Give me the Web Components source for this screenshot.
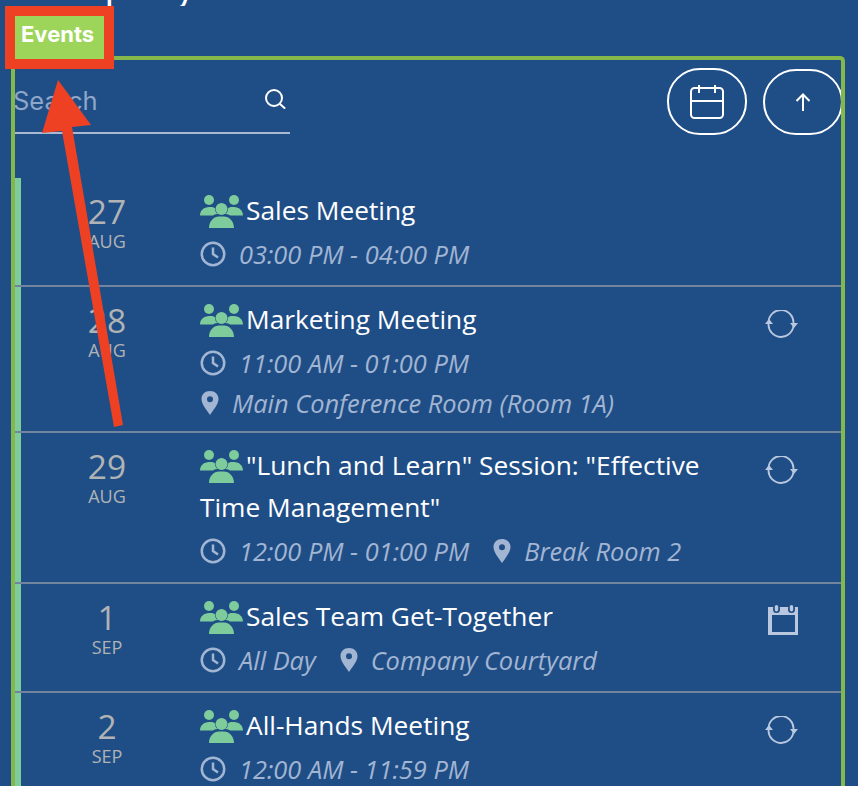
<!DOCTYPE html>
<html><head><meta charset="utf-8">
<style>
html,body{margin:0;height:786px;overflow:hidden;background:#1f4e87}
body{position:relative;font-family:"Open Sans","Noto Sans",sans-serif}
</style></head><body>
<template id="tpl-page">
<style>
:host{display:block;height:786px;overflow:hidden;position:relative}
.title{height:6px;overflow:hidden;color:#fff;font-size:40px;line-height:44px;font-family:"Open Sans",sans-serif;padding-left:18px}
.title span{display:block;margin-top:-38px;white-space:nowrap}
.tag{width:89px;height:43px;margin:10px 0 -3px 15px;background:#9dd55a;color:#fff;font:700 22px/37px Inter,sans-serif;box-sizing:border-box;padding-left:6px;position:relative;z-index:1}
.panel{margin-left:11px;width:834px;box-sizing:border-box;border:4px solid #84b84a;border-bottom:0;border-radius:5px 5px 0 0}
.toolbar{display:flex;align-items:flex-start;height:118px;box-sizing:border-box;padding-top:8px;overflow:hidden}
.spacer{flex:1}
.btns{display:flex;gap:16px;margin-right:-2px}
.btns round-btn:last-child{margin-top:1px}
</style>
<div class="title"><span>Company Events</span></div>
<div class="tag">Events</div>
<div class="panel">
  <div class="toolbar">
    <search-box></search-box><div class="spacer"></div>
    <div class="btns">
      <round-btn w="80" h="67"><svg width="34" height="34" viewBox="0 0 34 34" fill="none" stroke="#fff" stroke-width="2"><rect x="1" y="3" width="32" height="30" rx="3.500"/><path d="M1 16h32M9 0v8M25 0v8"/></svg></round-btn>
      <round-btn w="80" h="66"><svg width="16" height="18" viewBox="0 0 16 18" fill="none" stroke="#fff" stroke-width="2"><path d="M8 18V2M1.500 8L8 1.500 14.500 8"/></svg></round-btn>
    </div>
  </div>
  <slot></slot>
</div>
</template>
<template id="tpl-search">
<style>
:host{display:block;width:275px;height:64px;border-bottom:2px solid #a9b9d4;position:relative}
.row{display:flex;justify-content:space-between;align-items:center;height:64px;box-sizing:border-box;padding:2px 4px 0 0}
.ph{font:400 25.500px/30px Inter,sans-serif;color:#8ea6c8;margin-left:-2px}
svg{margin-bottom:4px}
</style>
<div class="row"><span class="ph">Search</span>
<svg width="22" height="22" viewBox="0 0 22 22" fill="none" stroke="#fff" stroke-width="2" stroke-linecap="round"><circle cx="10" cy="10" r="8"/><path d="M16 16l4.500 4"/></svg></div>
</template>
<template id="tpl-btn">
<style>
:host{display:flex;align-items:center;justify-content:center;box-sizing:border-box;border:2px solid #fff;border-radius:33px}
</style><slot></slot>
</template>
<template id="tpl-row">
<style>
:host{display:grid;grid-template-columns:179px 1fr 76px;box-sizing:border-box;border-left:6px solid #7ecb9c;position:relative}
:host::after{content:"";position:absolute;left:-6px;right:0;bottom:0;height:2px;background:#73849f}
.date{text-align:center;color:#b1b3b5;margin-left:-7px}
.d{font-size:33.500px;line-height:36px;margin-top:15px}
.m{font-size:18px;line-height:18px;margin-top:3px}
.main{min-width:0;padding-top:11px}
.t{color:#fff;font-size:26.300px;line-height:42px}
.t svg{vertical-align:-9px;margin-right:2px}
.meta{display:flex;flex-wrap:wrap;color:#a2b5d2;font-size:25.400px;font-style:italic;line-height:40px;column-gap:23px;margin-top:3px}
.rt{padding-top:23px}
</style>
<div class="date"><div class="d"><slot name="d"></slot></div><div class="m"><slot name="m"></slot></div></div>
<div class="main"><div class="t"><svg width="44" height="34" viewBox="0 0 44 34" fill="#7ecb9c"><circle cx="9" cy="5" r="5"/><circle cx="34" cy="5" r="5"/><circle cx="21.500" cy="14" r="6"/><path d="M0 20.500c0-5 4-8.500 9-8.500h2c2 0 3 .5 4 1.500 0 2 .5 4 2.500 5.500-2 0-4 1-4.500 1.500zM43 20.500c0-5-4-8.500-9-8.500h-2c-2 0-3 .5-4 1.500 0 2-.5 4-2.500 5.500 2 0 4 1 4.500 1.500zM9 33c0-7 5-11.500 10-11.500h5c5 0 10 4.500 10 11.500z"/></svg><slot name="t"></slot></div><div class="meta"><slot></slot></div></div>
<div class="rt"><slot name="r"></slot></div>
</template>
<template id="tpl-meta">
<style>
:host{display:inline-flex;align-items:center;gap:13px;white-space:nowrap}
svg{flex:none}
</style>
<svg id="ic" width="26" height="26" viewBox="0 0 26 26" fill="none" stroke="#a2b5d2" stroke-width="2.500"></svg><slot></slot>
</template>
<template id="tpl-sync">
<style>:host{display:block;width:34px;height:28px}</style>
<svg width="34" height="28" viewBox="0 0 34 28" fill="none" stroke="#b9c8de" stroke-width="1.800"><path d="M3.500 12A12.500 12.500 0 0 1 28.500 13M28.500 15A12.500 12.500 0 0 1 3.500 14"/><path d="M0 14h8L4 9zM25 13h8l-4 5z" fill="#b9c8de" stroke="none"/></svg>
</template>
<template id="tpl-cal">
<style>:host{display:block;width:30px;height:30px;margin:-2px 0 0 3px}</style>
<svg width="30" height="30" viewBox="0 0 30 30"><path fill="#b9c8de" fill-rule="evenodd" d="M0 2h30v28H0zM4 10v17h23V10z"/><rect x="5" y="0" width="7" height="8" rx="3.500" fill="#1f4e87"/><rect x="20" y="0" width="7" height="8" rx="3.500" fill="#1f4e87"/><rect x="6.800" y="0" width="3.400" height="6.500" rx="1.700" fill="#b9c8de"/><rect x="21.800" y="0" width="3.400" height="6.500" rx="1.700" fill="#b9c8de"/></svg>
</template>
<script>
function simple(name,tplId,init){customElements.define(name,class extends HTMLElement{
  constructor(){super();this.attachShadow({mode:"open"}).appendChild(document.getElementById(tplId).content.cloneNode(true));}
  connectedCallback(){init&&init(this);}
});}
simple("events-page","tpl-page");
simple("search-box","tpl-search");
simple("sync-icon","tpl-sync");
simple("cal-icon","tpl-cal");
simple("round-btn","tpl-btn",e=>{e.style.width=e.getAttribute("w")+"px";e.style.height=e.getAttribute("h")+"px";});
simple("event-row","tpl-row",e=>{e.style.height=e.getAttribute("h")+"px";});
simple("meta-item","tpl-meta",e=>{
  const s=e.shadowRoot.getElementById("ic");
  if(e.getAttribute("k")==="pin"){s.setAttribute("width","18");s.style.marginLeft="1px";s.setAttribute("viewBox","0 0 18 26");s.setAttribute("fill","#a2b5d2");s.setAttribute("stroke","none");
    s.innerHTML='<path fill-rule="evenodd" d="M9 1c5 0 8.500 3.500 8.500 8 0 5-5 11-8.500 16C5.500 20 .5 14 .5 9 .5 4.500 4 1 9 1zm0 5.200a3 3 0 100 6 3 3 0 000-6z"/>';}
  else s.innerHTML='<circle cx="13" cy="13" r="11.250"/><path d="M13 6.500V13l5 3.500"/>';
});
</script>
<events-page>
<event-row h="109"><span slot="d">27</span><span slot="m">AUG</span><span slot="t">Sales Meeting</span><meta-item>03:00 PM - 04:00 PM</meta-item></event-row>
<event-row h="146"><span slot="d">28</span><span slot="m">AUG</span><span slot="t">Marketing Meeting</span><meta-item>11:00 AM - 01:00 PM</meta-item><meta-item k="pin">Main Conference Room (Room 1A)</meta-item><sync-icon slot="r"></sync-icon></event-row>
<event-row h="151"><span slot="d">29</span><span slot="m">AUG</span><span slot="t">"Lunch and Learn" Session: "Effective Time Management"</span><meta-item>12:00 PM - 01:00 PM</meta-item><meta-item k="pin">Break Room 2</meta-item><sync-icon slot="r"></sync-icon></event-row>
<event-row h="109"><span slot="d">1</span><span slot="m">SEP</span><span slot="t">Sales Team Get-Together</span><meta-item>All Day</meta-item><meta-item k="pin">Company Courtyard</meta-item><cal-icon slot="r"></cal-icon></event-row>
<event-row h="108"><span slot="d">2</span><span slot="m">SEP</span><span slot="t">All-Hands Meeting</span><meta-item>12:00 AM - 11:59 PM</meta-item><sync-icon slot="r"></sync-icon></event-row>
</events-page>
<annot-overlay></annot-overlay>
<script>
customElements.define("annot-overlay",class extends HTMLElement{
  constructor(){super();this.attachShadow({mode:"open"}).innerHTML=`<style>:host{position:absolute;inset:0;pointer-events:none;display:block}svg{position:absolute;left:0;top:0}</style>
  <svg width="858" height="786"><rect x="10" y="11" width="99" height="53" fill="none" stroke="#ee4123" stroke-width="10"/><polygon points="58,80 91,125 72,127 123,425 114,427 62,131 42,133" fill="#ee4123"/></svg>`;}
});
</script>
</body></html>
